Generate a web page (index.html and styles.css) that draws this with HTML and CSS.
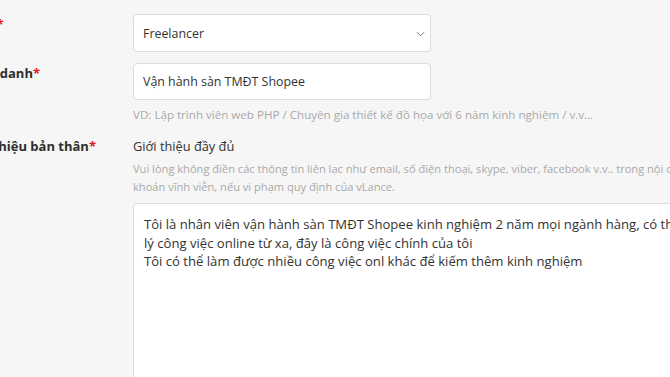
FILE: index.html
```html
<html>
  <head>
    <title>Hồ sơ freelancer</title>
    <link rel="stylesheet" href="styles.css">
  </head>
  <body>
    <form class="profile">
      <div class="row">
        <label class="label" for="role">Dạng<span class="req">*</span></label>
        <div class="field">
          <div class="select-wrap">
            <select id="role" class="control">
              <option>Freelancer</option>
            </select>
            <svg class="caret" viewBox="0 0 10 6" width="9" height="6">
              <polyline points="1,1 5,5 9,1" />
            </svg>
          </div>
        </div>
      </div>

      <div class="row">
        <label class="label" for="title">Chức danh<span class="req">*</span></label>
        <div class="field">
          <input id="title" class="control" type="text" value="Vận hành sàn TMĐT Shopee"/>
          <p class="hint">VD: Lập trình viên web PHP / Chuyên gia thiết kế đồ họa với 6 năm kinh nghiệm / v.v...</p>
        </div>
      </div>

      <div class="row">
        <label class="label label-top" for="about">Giới thiệu bản thân<span class="req">*</span></label>
        <div class="field">
          <div class="sub-title">Giới thiệu đầy đủ</div>
          <p class="hint wide">Vui lòng không điền các thông tin liên lạc như email, số điện thoại, skype, viber, facebook v.v.. trong nội dung này. Bạn có thể bị khóa tài khoản vĩnh viễn, nếu vi phạm quy định của vLance.</p>
          <textarea id="about" class="control area">Tôi là nhân viên vận hành sàn TMĐT Shopee kinh nghiệm 2 năm mọi ngành hàng, có thể xử lý công việc online từ xa, đây là công việc chính của tôi
Tôi có thể làm được nhiều công việc onl khác để kiếm thêm kinh nghiệm</textarea>
        </div>
      </div>
    </form>
  </body>
</html>
```

FILE: styles.css
```css
:root {
  --border: #dcdcdc;
  --text: #333;
  --muted: #a9a9a9;
  --red: #e3151a;
}
body {
  margin: 0;
  padding-top: 14px;
  background: #f6f6f6;
  font-family: 'Open Sans', 'Noto Sans', sans-serif;
  color: var(--text);
  overflow: hidden;
}
.profile {
  margin-left: -37px;
  width: 900px;
}
.row {
  display: grid;
  grid-template-columns: 170px 1fr;
  margin-bottom: 11px;
}
.label {
  font-size: 13px;
  font-weight: 700;
  line-height: 20px;
  color: #2e2e2e;
}
.label-top {
  margin-top: 1px;
}
.req {
  color: var(--red);
}
.field {
  min-width: 0;
}
.control {
  display: block;
  box-sizing: border-box;
  width: 298px;
  margin: 0;
  padding: 0 9px;
  border: 1px solid var(--border);
  border-radius: 4px;
  background: #fff;
  font-family: inherit;
  font-size: 12.4px;
  color: var(--text);
  outline: none;
}
.select-wrap {
  position: relative;
  width: 298px;
}
select.control {
  height: 38px;
  -webkit-appearance: none;
  appearance: none;
}
.caret {
  position: absolute;
  right: 6px;
  top: 17px;
  fill: none;
  stroke: #777;
  stroke-width: 1.1;
}
input.control {
  height: 37px;
}
.hint {
  margin: 6px 0 0;
  font-size: 11.6px;
  line-height: 18px;
  color: var(--muted);
  white-space: nowrap;
}
.wide {
  width: 720px;
  font-size: 11.1px;
  white-space: normal;
  margin-top: 4px;
}
.sub-title {
  margin-top: 1px;
  font-size: 12.8px;
  line-height: 20px;
}
.area {
  width: 583px;
  height: 260px;
  margin-top: 7px;
  padding: 11px 10px;
  font-size: 13.1px;
  line-height: 18.5px;
  resize: none;
}
```
